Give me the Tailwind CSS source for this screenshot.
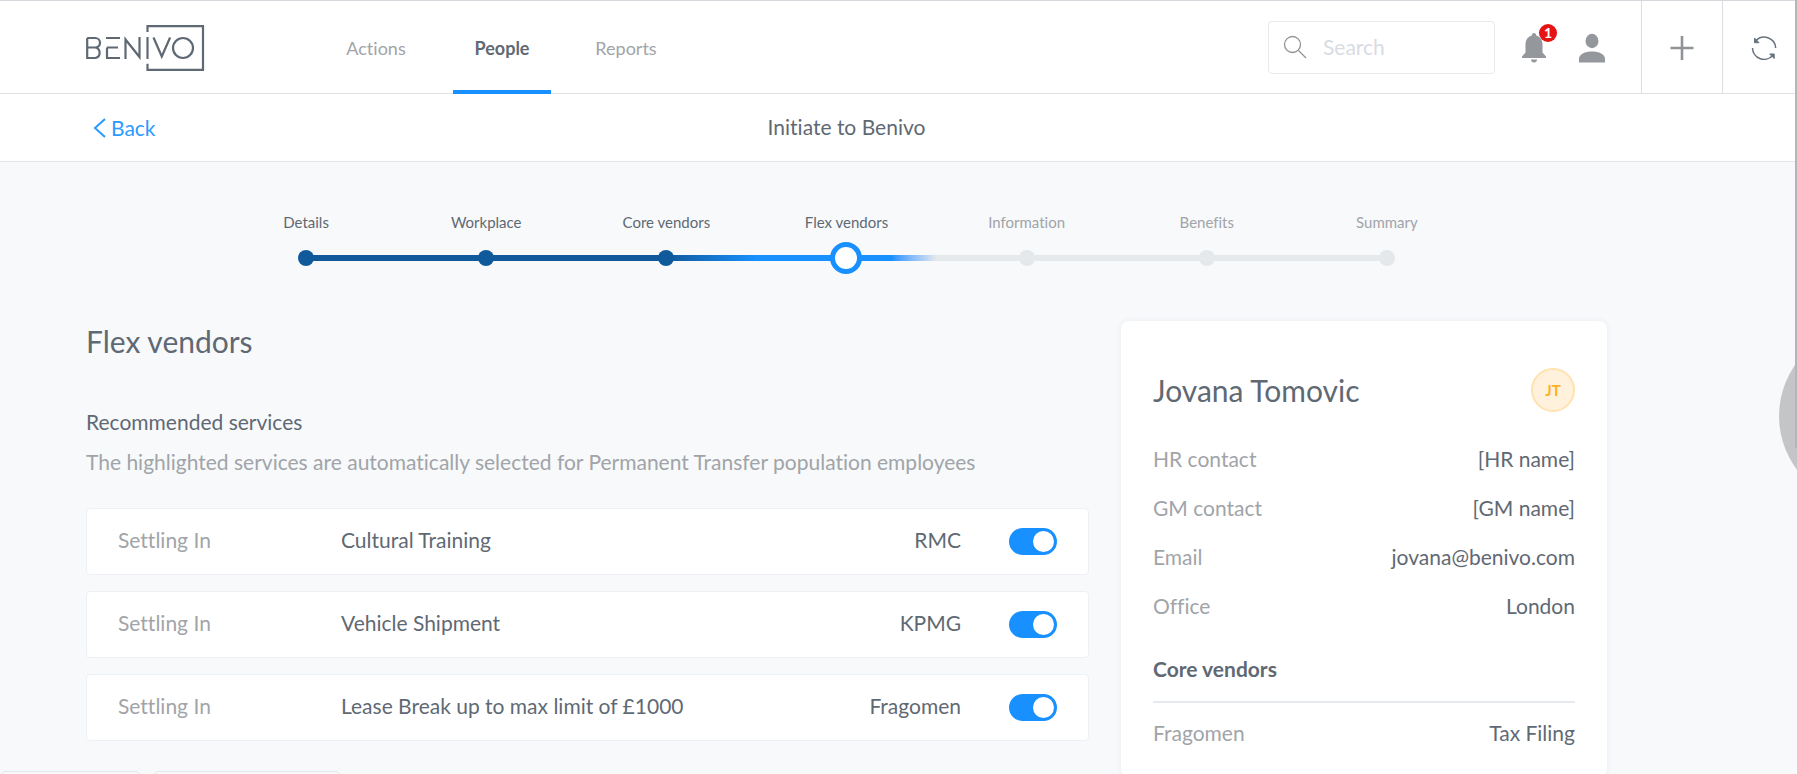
<!DOCTYPE html>
<html lang="en">
<head>
<meta charset="utf-8">
<meta name="viewport" content="width=device-width, initial-scale=1">
<title>Initiate to Benivo</title>
<script src="https://cdn.jsdelivr.net/npm/@tailwindcss/browser@4"></script>
</head>
<body class="relative h-screen overflow-hidden bg-[#f7f9fb] font-['Lato','Liberation_Sans',sans-serif] text-[21px] leading-6 text-[#5f6974] [font-variant-ligatures:none]">
<header class="flex h-[94px] border-t border-b border-t-[#d7d8dd] border-b-[#dfe1e4] bg-white pl-[86px]">
  <a href="#" aria-label="Benivo" class="mr-[142px] self-center pt-0.5">
    <svg class="block h-[46px] w-[119px]" viewBox="0 0 119 46" fill="none" stroke="#5f6974" stroke-width="2.200">
      <path d="M61.500 7V1.200h55.500v43.600H61.500v-6"/>
      <path d="M1.200 22.500h8.300M1.200 13v20h8.300a5.400 5.400 0 0 0 0-10.500M1.200 13h7.800a4.700 4.700 0 0 1 .5 9.500"/>
      <path d="M20 13h14M21 22.500h11M20 33h14M21 22.500V33M39.500 34V14.500l14 17.500V12M61.500 12v22M67.500 12.500l8.300 19 8.300-19"/>
      <circle cx="97" cy="23" r="10"/>
    </svg>
  </a>
  <nav class="-mb-px flex text-[18px] text-[#a1a4a8]">
    <a href="#" class="mr-[48px] flex w-[58px] items-center justify-center">Actions</a>
    <a href="#" class="mr-[26px] flex w-[98px] items-center justify-center border-t-4 border-b-4 border-t-transparent border-b-[#1890ff] font-bold text-[#5f6974]">People</a>
    <a href="#" class="flex w-[98px] items-center justify-center">Reports</a>
  </nav>
  <label class="mr-[25px] ml-auto flex h-[53px] w-[227px] items-center gap-4 self-center rounded border border-[#e8e9ec] px-3.5">
    <svg class="size-6 shrink-0" viewBox="0 0 24 24" fill="none" stroke="#8f9398" stroke-width="1.300"><circle cx="9.500" cy="9.500" r="8"/><path d="M15.500 15.500 23 23"/></svg>
    <input type="search" aria-label="Search" placeholder="Search" class="w-full min-w-0 bg-transparent outline-none placeholder:text-[#d9dbe4]">
  </label>
  <button aria-label="Notifications, 1 new" class="relative mr-[30px] self-center pt-0.5">
    <svg class="block h-8 w-7" viewBox="0 0 28 32" fill="#94979c"><path d="M14 1c1.300 0 2.200 1 2.200 2.400 4 1.200 6.300 4.600 6.300 9v8l3.500 4.100V26H2v-1.500l3.500-4.100v-8c0-4.400 2.300-7.800 6.300-9C11.800 2 12.700 1 14 1zM11 27.500h6a3 3 0 0 1-6 0z"/></svg>
    <span class="absolute -top-1.5 left-[19px] flex size-[18px] items-center justify-center rounded-full bg-[#e51414] text-[14px] leading-none font-bold text-white">1</span>
  </button>
  <button aria-label="Account" class="mr-[35px] self-center pt-0.5">
    <svg class="block h-8 w-7" viewBox="0 0 28 32" fill="#94979c"><ellipse cx="14" cy="9" rx="6.500" ry="7.200"/><path d="M1 30.500v-3.500c0-5 6-7.500 13-7.500s13 2.500 13 7.500v3.500z"/></svg>
  </button>
  <button aria-label="Add" class="flex w-[81px] items-center justify-center border-l border-[#dcdee1] pt-0.5">
    <svg class="size-6" viewBox="0 0 24 24" stroke="#8f9398" stroke-width="2.600"><path d="M.5 12h23M12 0v24"/></svg>
  </button>
  <button aria-label="Refresh" class="flex w-[75px] items-center justify-center border-l border-[#dcdee1] pt-0.5 pl-2">
    <svg class="size-[26px]" viewBox="-1 -1 26 26" fill="none" stroke="#68727c" stroke-width="1.500"><path d="M3.500 5.200A11.500 11.500 0 0 1 23.700 12M.5 12a11.500 11.500 0 0 0 20.500 7"/><path d="M2.500 2v4.700h4.500zM17.700 18h4.500v4.500z" fill="#68727c" stroke-width="1"/></svg>
  </button>
</header>

<div class="grid h-[68px] grid-cols-[1fr_auto_1fr] items-center border-b border-[#e1e4e8] bg-white pr-[197px] pl-[93px]">
  <a href="#" class="flex items-center gap-1 text-[#2b9aff]">
    <svg class="h-5 w-3.5" viewBox="0 0 14 20" fill="none" stroke="currentColor" stroke-width="2"><path d="M12 1 2 10l10 9"/></svg>
    Back
  </a>
  <h1 class="pb-0.5">Initiate to Benivo</h1>
</div>

<ol class="mt-12 mr-[320px] ml-[216px] grid grid-cols-7 text-center text-[15px]">
  <li class="flex flex-col gap-2">Details
    <span class="relative flex h-8 items-center justify-center"><span class="absolute right-0 h-1.5 w-1/2 bg-[#10599b]"></span><span class="size-4 rounded-full bg-[#10599b]"></span></span></li>
  <li class="flex flex-col gap-2">Workplace
    <span class="relative flex h-8 items-center justify-center"><span class="absolute h-1.5 w-full bg-[#10599b]"></span><span class="size-4 rounded-full bg-[#10599b]"></span></span></li>
  <li class="flex flex-col gap-2">Core vendors
    <span class="relative flex h-8 items-center justify-center"><span class="absolute h-1.5 w-full bg-linear-to-r from-[#10599b] from-50% to-[#1890ff]"></span><span class="relative size-4 rounded-full bg-[#10599b]"></span></span></li>
  <li class="flex flex-col gap-2">Flex vendors
    <span class="relative flex h-8 items-center justify-center"><span class="absolute h-1.5 w-full bg-linear-to-r from-[#1890ff] from-75% to-[#e6e9eb]"></span><span class="relative size-8 rounded-full border-[5px] border-[#1890ff] bg-white"></span></span></li>
  <li class="flex flex-col gap-2"><span class="text-[#a1a4a8]">Information</span>
    <span class="relative flex h-8 items-center justify-center"><span class="absolute h-1.5 w-full bg-[#e6e9eb]"></span><span class="size-4 rounded-full bg-[#e4e8ea]"></span></span></li>
  <li class="flex flex-col gap-2"><span class="text-[#a1a4a8]">Benefits</span>
    <span class="relative flex h-8 items-center justify-center"><span class="absolute h-1.5 w-full bg-[#e6e9eb]"></span><span class="size-4 rounded-full bg-[#e4e8ea]"></span></span></li>
  <li class="flex flex-col gap-2"><span class="text-[#a1a4a8]">Summary</span>
    <span class="relative flex h-8 items-center justify-center"><span class="absolute left-0 h-1.5 w-1/2 bg-[#e6e9eb]"></span><span class="size-4 rounded-full bg-[#e4e8ea]"></span></span></li>
</ol>

<main class="mt-[47px] mr-[190px] ml-[86px] flex items-start gap-8">
  <section class="min-w-0 flex-1 pt-1">
    <h2 class="text-[30px] leading-8">Flex vendors</h2>
    <h3 class="mt-[53px]">Recommended services</h3>
    <p class="mt-4 text-[#a1a4a8]">The highlighted services are automatically selected for Permanent Transfer population employees</p>
    <ul class="mt-[34px] flex flex-col gap-4">
      <li><label class="flex h-[67px] items-center rounded border border-[#edf1f5] bg-white px-[31px] [&>span]:pb-[3px]">
        <span class="w-[223px] text-[#a1a4a8]">Settling In</span><span>Cultural Training</span><span class="mr-12 ml-auto">RMC</span>
        <input type="checkbox" checked class="flex h-[27px] w-12 appearance-none items-center rounded-full bg-[#1890ff] px-[3px] before:size-[21px] before:rounded-full before:bg-white checked:justify-end">
      </label></li>
      <li><label class="flex h-[67px] items-center rounded border border-[#edf1f5] bg-white px-[31px] [&>span]:pb-[3px]">
        <span class="w-[223px] text-[#a1a4a8]">Settling In</span><span>Vehicle Shipment</span><span class="mr-12 ml-auto">KPMG</span>
        <input type="checkbox" checked class="flex h-[27px] w-12 appearance-none items-center rounded-full bg-[#1890ff] px-[3px] before:size-[21px] before:rounded-full before:bg-white checked:justify-end">
      </label></li>
      <li><label class="flex h-[67px] items-center rounded border border-[#edf1f5] bg-white px-[31px] [&>span]:pb-[3px]">
        <span class="w-[223px] text-[#a1a4a8]">Settling In</span><span>Lease Break up to max limit of £1000</span><span class="mr-12 ml-auto">Fragomen</span>
        <input type="checkbox" checked class="flex h-[27px] w-12 appearance-none items-center rounded-full bg-[#1890ff] px-[3px] before:size-[21px] before:rounded-full before:bg-white checked:justify-end">
      </label></li>
    </ul>
  </section>

  <aside class="w-[486px] rounded-lg bg-white px-8 pt-[47px] pb-8 shadow-[0_0_6px_rgba(60,80,110,0.07)]">
    <div class="flex items-center justify-between">
      <h2 class="text-[30px] leading-8">Jovana Tomovic</h2>
      <span class="flex size-11 items-center justify-center rounded-full border-2 border-[#ffe2ae] bg-[#fff1dc] text-[15px] font-bold text-[#ffb11f]">JT</span>
    </div>
    <dl class="mt-[35px] flex flex-col gap-[25px]">
      <div class="flex justify-between"><dt class="text-[#a1a4a8]">HR contact</dt><dd>[HR name]</dd></div>
      <div class="flex justify-between"><dt class="text-[#a1a4a8]">GM contact</dt><dd>[GM name]</dd></div>
      <div class="flex justify-between"><dt class="text-[#a1a4a8]">Email</dt><dd>jovana@benivo.com</dd></div>
      <div class="flex justify-between"><dt class="text-[#a1a4a8]">Office</dt><dd>London</dd></div>
    </dl>
    <h3 class="mt-[39px] border-b-2 border-[#e6eaf0] pb-5 font-bold">Core vendors</h3>
    <dl class="mt-[18px]">
      <div class="flex justify-between"><dt class="text-[#a1a4a8]">Fragomen</dt><dd>Tax Filing</dd></div>
    </dl>
  </aside>
</main>

<!-- Footer buttons that start at the bottom edge of the window -->
<div class="absolute -bottom-[49px] left-0 flex gap-3">
  <button class="h-[52px] w-[141px] rounded-md border border-[#e4e6e9]" aria-label="Cancel"></button>
  <button class="h-[52px] w-[188px] rounded-md border border-[#e4e6e9]" aria-label="Save"></button>
</div>

<!-- Side handle and window edge -->
<div class="absolute top-[327px] -right-[160px] size-[178px] rounded-full bg-[#c4c5c7]"></div>
<div class="absolute top-0 right-0 h-[448px] w-0.5 bg-[#b5b6b8]"></div>
</body>
</html>
